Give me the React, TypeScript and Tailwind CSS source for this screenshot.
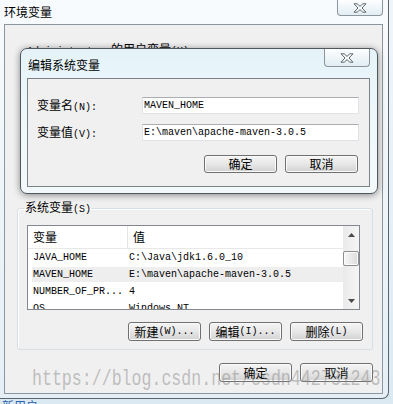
import type { ReactNode } from 'react';

const HAN = /([\u4e00-\u9fff]+)/;

// CJK runs at 12px, everything else in a 6px-advance mono (like SimSun half-width)
function Mixed({ text }: { text: string }) {
  const parts = text.split(HAN).filter(Boolean);
  return (
    <>
      {parts.map((p, i) =>
        HAN.test(p) ? (
          <span key={i} className="font-['Noto_Sans_CJK_SC',sans-serif] text-[12px]">
            {p}
          </span>
        ) : (
          <span key={i} className="font-['Liberation_Mono',monospace] text-[10px] whitespace-pre">
            {p}
          </span>
        )
      )}
    </>
  );
}

function WinButton({ label, className = '' }: { label: string; className?: string }) {
  return (
    <div
      className={`flex items-center justify-center rounded-[3px] border border-[#707070] bg-gradient-to-b from-[#f5f5f5] via-[#e7e7e7] to-[#d3d3d3] shadow-[inset_0_0_0_1px_#fafafa] leading-[14px] text-black ${className}`}
    >
      <Mixed text={label} />
    </div>
  );
}

function CloseButton({ className = '' }: { className?: string }) {
  return (
    <div
      className={`flex items-center justify-center rounded-b-[4px] border border-t-0 border-[#8b959c] bg-gradient-to-b from-[#fdfeff] to-[#e2edf3] ${className}`}
    >
      <svg width="14" height="10" viewBox="0 0 14 10">
        <path
          d="M1 0.8h3.2L7 3.4 9.8 0.8H13L9 5l4 4.2H9.8L7 6.6 4.2 9.2H1L5 5z"
          fill="#fcfdfe"
          stroke="#5d666d"
          strokeWidth="1"
          strokeLinejoin="round"
        />
      </svg>
    </div>
  );
}

function Arrow({ up }: { up?: boolean }) {
  return (
    <svg width="7" height="4" viewBox="0 0 7 4">
      <path d={up ? 'M0 4L3.5 0 7 4z' : 'M0 0L3.5 4 7 0z'} fill="#4a4a4a" />
    </svg>
  );
}

const rows = [
  { name: 'JAVA_HOME', value: 'C:\\Java\\jdk1.6.0_10' },
  { name: 'MAVEN_HOME', value: 'E:\\maven\\apache-maven-3.0.5', selected: true },
  { name: 'NUMBER_OF_PR...', value: '4' },
  { name: 'OS', value: 'Windows_NT' },
];

function VarList() {
  return (
    <div className="ml-[9px] flex h-[85px] w-[333px] overflow-hidden border border-[#828790] bg-white">
      <div className="flex flex-1 flex-col">
        <div className="flex h-[23px] shrink-0 border-b border-[#e8e8e8] text-black">
          <div className="flex w-[100px] items-center border-r border-[#e5e5e5] pl-[5px]">
            <Mixed text="变量" />
          </div>
          <div className="flex items-center pl-[5px]">
            <Mixed text="值" />
          </div>
        </div>
        {rows.map((r) => (
          <div key={r.name} className="h-[17px] shrink-0 py-[1px] pl-[4px]">
            <div className={`flex h-full items-center ${r.selected ? 'bg-[#eeeeee]' : ''}`}>
              <div className="w-[96px] pl-[1px] font-['Liberation_Mono',monospace] text-[10px] text-black">
                {r.name}
              </div>
              <div className="pl-[1px] font-['Liberation_Mono',monospace] text-[10px] text-black">
                {r.value}
              </div>
            </div>
          </div>
        ))}
      </div>
      {/* scrollbar */}
      <div className="flex w-[16px] flex-col bg-gradient-to-r from-[#eaeaea] to-[#f5f5f5]">
        <div className="flex h-[17px] items-center justify-center">
          <Arrow up />
        </div>
        <div className="mt-[8px] h-[15px] rounded-[2px] border border-[#8f8f8f] bg-gradient-to-r from-[#f7f7f7] to-[#dcdcdc] shadow-[inset_0_0_0_1px_#fbfbfb]" />
        <div className="flex-1" />
        <div className="flex h-[17px] items-center justify-center">
          <Arrow />
        </div>
      </div>
    </div>
  );
}

function EditDialog() {
  return (
    <div className="absolute left-[20px] top-[48px] h-[146px] w-[358px] rounded-[7px] border border-[#50575d] bg-gradient-to-b from-[#e5f3f9] via-[#eef8fb] to-[#f3f9fb] shadow-[0_1px_7px_rgba(0,0,0,0.45)]">
      <div className="flex h-[29px] items-start">
        <div className="pl-[7px] pt-[8px] leading-[14px] text-black">
          <span className="font-['Noto_Sans_CJK_SC',sans-serif] text-[12px]">编辑系统变量</span>
        </div>
        <CloseButton className="ml-auto mr-[7px] h-[18px] w-[46px]" />
      </div>
      <div className="ml-[6px] h-[109px] w-[343px] border border-[#7d8287] bg-[#f0f0f0] pl-[9px] pt-[18px]">
        <div className="flex h-[17px] items-center">
          <div className="w-[105px] leading-[14px] text-black">
            <Mixed text="变量名(N):" />
          </div>
          <div className="flex h-[17px] w-[217px] items-center border border-[#dfe3e8] border-t-[#abadb3] bg-white pl-[1px] font-['Liberation_Mono',monospace] text-[10px] text-black">
            MAVEN_HOME
          </div>
        </div>
        <div className="mt-[10px] flex h-[17px] items-center">
          <div className="w-[105px] leading-[14px] text-black">
            <Mixed text="变量值(V):" />
          </div>
          <div className="flex h-[17px] w-[217px] items-center border border-[#dfe3e8] border-t-[#abadb3] bg-white pl-[1px] font-['Liberation_Mono',monospace] text-[10px] text-black">
            E:\maven\apache-maven-3.0.5
          </div>
        </div>
        <div className="mt-[14px] flex justify-end gap-[8px] pr-[11px]">
          <WinButton label="确定" className="h-[18px] w-[73px]" />
          <WinButton label="取消" className="h-[18px] w-[73px]" />
        </div>
      </div>
    </div>
  );
}

export default function App() {
  return (
    <div className="relative h-[404px] w-[393px] overflow-hidden bg-gradient-to-b from-[#f1f6fa] to-[#dbe9f2]">
      {/* outer window: 环境变量 */}
      <div className="h-[399px] w-[389px] rounded-br-[7px] border-b border-r border-[#5a646c] bg-gradient-to-b from-[#f8fbfd] via-[#eef5f9] to-[#e5eff5]">
        <div className="flex h-[24px] items-start">
          <div className="pl-[4px] pt-[4px] leading-[14px] text-black">
            <span className="font-['Noto_Sans_CJK_SC',sans-serif] text-[12px]">环境变量</span>
          </div>
          <CloseButton className="ml-auto mr-[5px] h-[16px] w-[46px]" />
        </div>

        <div className="ml-[4px] h-[370px] w-[379px] border border-[#8c969e] bg-[#f0f0f0]">
          <div className="mt-[17px] h-[12px] pl-[22px] leading-[12px] text-black">
            <Mixed text="Administrator 的用户变量(U)" />
          </div>

          <fieldset className="ml-[12px] mt-[146px] h-[150px] w-[356px] rounded-[3px] border border-[#d5dfe5] shadow-[inset_1px_1px_0_#ffffff]">
            <legend className="ml-[6px] px-[1px] leading-[12px] text-black">
              <Mixed text="系统变量(S)" />
            </legend>
            <div className="mt-[9px]">
              <VarList />
            </div>
            <div className="mt-[12px] flex justify-end gap-[8px] pr-[9px]">
              <WinButton label="新建(W)..." className="h-[19px] w-[73px]" />
              <WinButton label="编辑(I)..." className="h-[19px] w-[73px]" />
              <WinButton label="删除(L)" className="h-[19px] w-[73px]" />
            </div>
          </fieldset>

          <div className="mt-[13px] flex justify-end gap-[8px] pr-[9px]">
            <WinButton label="确定" className="h-[19px] w-[73px]" />
            <WinButton label="取消" className="h-[19px] w-[73px]" />
          </div>
        </div>
      </div>

      {/* desktop behind, barely visible */}
      <div className="h-[5px] overflow-hidden pl-[2px] leading-[12px] text-[#2a62b0]">
        <span className="font-['Noto_Sans_CJK_SC',sans-serif] text-[12px]">新用户</span>
      </div>

      <EditDialog />

      {/* watermark */}
      <div className="pointer-events-none absolute left-[32px] top-[369px] origin-left scale-x-[0.754] whitespace-nowrap font-['Liberation_Mono',monospace] text-[22px] leading-[22px] text-[#8a8a8a]/50">
        https://blog.csdn.net/csdn442731243
      </div>
    </div>
  );
}
